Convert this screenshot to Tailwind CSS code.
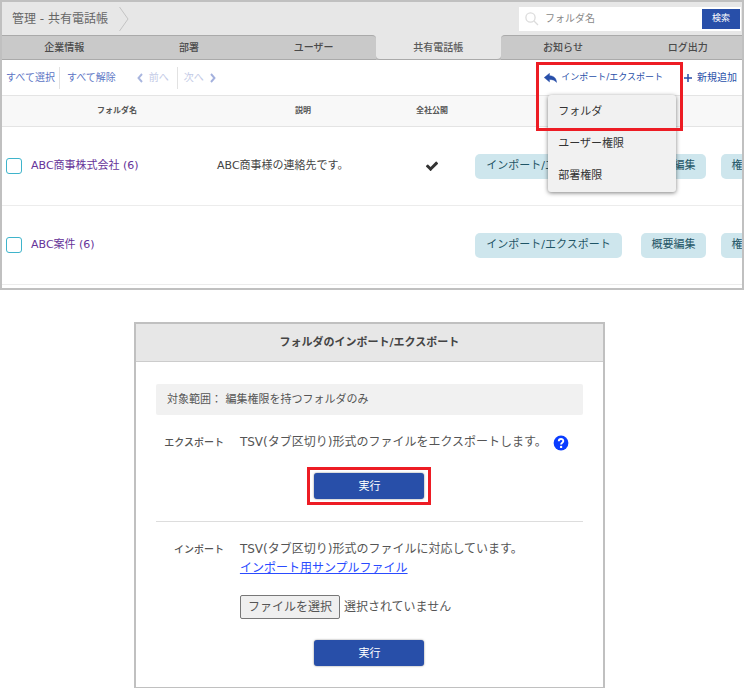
<!DOCTYPE html>
<html lang="ja">
<head>
<meta charset="utf-8">
<meta name="viewport" content="width=device-width, initial-scale=1">
<title>管理 - 共有電話帳</title>
<script src="https://cdn.jsdelivr.net/npm/@tailwindcss/browser@4"></script>
</head>
<body class="bg-white text-[#444] font-['DejaVu_Sans','Noto_Sans_CJK_JP',sans-serif]">

<section class="border-2 border-[#c0c0c0] overflow-hidden pb-[3px]">
  <header class="flex items-center h-[33px] bg-[#e7e7e7] pl-[10px] pr-px">
    <h1 class="text-[12px] text-[#666]">管理 - 共有電話帳</h1>
    <svg class="ml-[10px] w-3 h-[26px]" viewBox="0 0 12 26" fill="none" stroke="#c4c4c4" aria-hidden="true"><path d="M1.500 1 10 13 1.500 25"/></svg>
    <form class="ml-auto flex items-center bg-white h-6 w-[222px] pr-px">
      <svg class="ml-[6px] w-[14px] h-[14px] shrink-0" viewBox="0 0 14 14" fill="none" stroke="#dcdcdc" stroke-width="1.300" aria-hidden="true"><circle cx="5.500" cy="5.500" r="4.600"/><path d="m9 9 4 4"/></svg>
      <input type="text" aria-label="フォルダ名" placeholder="フォルダ名" class="ml-[6px] min-w-0 flex-1 text-[10px] outline-none placeholder:text-[#888]">
      <button type="button" class="w-[38px] h-5 shrink-0 bg-[#284fa9] text-white text-[9px]">検索</button>
    </form>
  </header>

  <nav class="grid grid-cols-6 -mr-2 h-[25px] bg-[#e7e7e7] text-[10px] font-medium text-[#4a4a4a] text-center leading-[23px]">
    <a href="#" class="bg-[#c9c9c9] border-y border-[#aaa]">企業情報</a>
    <a href="#" class="bg-[#c9c9c9] border-y border-[#aaa]">部署</a>
    <a href="#" class="bg-[#c9c9c9] border-y border-[#aaa] rounded-tr-[4px]">ユーザー</a>
    <span class="bg-[#bbb]"><a href="#" aria-current="page" class="block h-[25px] pt-px bg-[#e7e7e7] border-b border-[#aaa] rounded-b-[4px] text-[#5a5a5a]">共有電話帳</a></span>
    <a href="#" class="bg-[#c9c9c9] border-y border-[#aaa] rounded-tl-[4px]">お知らせ</a>
    <a href="#" class="bg-[#c9c9c9] border-y border-[#aaa]">ログ出力</a>
  </nav>

  <div class="flex items-center h-[35px] pl-1 pr-[5px] text-[10px] text-[#4a63b8]">
    <button type="button" class="text-[#5b74c4]">すべて選択</button>
    <span class="ml-1 mr-[7px] h-[22px] w-px bg-[#e2e2e2]"></span>
    <button type="button" class="text-[#5b74c4]">すべて解除</button>
    <button type="button" disabled class="ml-[21px] flex items-center gap-[6px] text-[#c3cae6]">
      <svg class="w-[6px] h-[10px]" viewBox="0 0 6 10" fill="none" stroke="#a9b6df" stroke-width="1.900" aria-hidden="true"><path d="M5 1 1.500 5 5 9"/></svg>前へ</button>
    <span class="ml-2 mr-[6px] h-[22px] w-px bg-[#e2e2e2]"></span>
    <button type="button" disabled class="flex items-center gap-[6px] text-[#c3cae6]">次へ
      <svg class="w-[6px] h-[10px]" viewBox="0 0 6 10" fill="none" stroke="#a3b0dd" stroke-width="1.900" aria-hidden="true"><path d="M1 1 4.500 5 1 9"/></svg></button>

    <div class="relative ml-auto mr-[21px]">
      <button type="button" aria-expanded="true" class="flex items-center gap-1 text-[9px] text-[#284fa9]">
        <svg class="w-[13px] h-[10px]" viewBox="0 0 13 10" fill="#284fa9" aria-hidden="true"><path d="M.2 4.600 5.500.3v2.500c4.200.1 6.700 2 7.100 6.700C11 7.400 9 6.500 5.500 6.500V9z" stroke="#284fa9" stroke-width=".4" stroke-linejoin="round"/></svg>インポート/エクスポート</button>
      <ul class="absolute z-10 left-1 top-[24px] w-32 pt-px rounded-[3px] bg-[#f1f1f1] shadow-[0_1px_4px_rgba(0,0,0,0.5)] text-[11px] text-[#333] leading-8">
        <li><a href="#" class="block px-[10px]">フォルダ</a></li>
        <li><a href="#" class="block px-[10px]">ユーザー権限</a></li>
        <li><a href="#" class="block px-[10px]">部署権限</a></li>
      </ul>
      <span class="absolute z-20 -left-2 -top-[9px] w-[147px] h-[69px] border-3 border-[#ed1c24] pointer-events-none"></span>
    </div>
    <button type="button" class="flex items-center gap-[5px] text-[#284fa9]">
      <svg class="w-2 h-2" viewBox="0 0 8 8" stroke="#284fa9" stroke-width="1.500" aria-hidden="true"><path d="M4 0v8M0 4h8"/></svg>新規追加</button>
  </div>

  <table class="w-full table-fixed border-collapse text-[11px]">
    <colgroup><col class="w-[29px]"><col class="w-[172px]"><col class="w-[200px]"><col class="w-[58px]"><col></colgroup>
    <thead>
      <tr class="h-[31px] bg-[#f8f8f8] border-y border-[#e4e4e4] text-[8px] text-[#555]">
        <th></th><th>フォルダ名</th><th>説明</th><th>全社公開</th><th></th>
      </tr>
    </thead>
    <tbody>
      <tr class="h-[79px] border-b border-[#ececec]">
        <td class="pl-1"><input type="checkbox" aria-label="ABC商事株式会社" class="block appearance-none w-4 h-4 rounded-[3px] border border-[#3fb4cb]"></td>
        <td><a href="#" class="text-[#663399]">ABC商事株式会社 (6)</a></td>
        <td class="pl-[14px] text-[#444]">ABC商事様の連絡先です。</td>
        <td><svg class="mx-auto w-[14px] h-[14px]" viewBox="0 0 1792 1792" fill="#333" role="img" aria-label="公開"><path d="M1671 566q0 40-28 68l-724 724-136 136q-28 28-68 28t-68-28l-136-136-362-362q-28-28-28-68t28-68l136-136q28-28 68-28t68 28l294 295 656-657q28-28 68-28t68 28l136 136q28 28 28 68z"/></svg></td>
        <td class="pl-[14px] overflow-hidden">
          <div class="flex text-[#1f5566]">
            <button type="button" class="shrink-0 h-[25px] w-[147px] rounded-[5px] bg-[#cee6ed]">インポート/エクスポート</button>
            <button type="button" class="shrink-0 h-[25px] w-[65px] ml-[19px] rounded-[5px] bg-[#cee6ed]">概要編集</button>
            <button type="button" class="shrink-0 h-[25px] w-[65px] ml-[15px] rounded-[5px] bg-[#cee6ed]">権限編集</button>
          </div>
        </td>
      </tr>
      <tr class="h-[79px] border-b border-[#ececec]">
        <td class="pl-1"><input type="checkbox" aria-label="ABC案件" class="block appearance-none w-4 h-4 rounded-[3px] border border-[#3fb4cb]"></td>
        <td><a href="#" class="text-[#663399]">ABC案件 (6)</a></td>
        <td></td>
        <td></td>
        <td class="pl-[14px] overflow-hidden">
          <div class="flex text-[#1f5566]">
            <button type="button" class="shrink-0 h-[25px] w-[147px] rounded-[5px] bg-[#cee6ed]">インポート/エクスポート</button>
            <button type="button" class="shrink-0 h-[25px] w-[65px] ml-[19px] rounded-[5px] bg-[#cee6ed]">概要編集</button>
            <button type="button" class="shrink-0 h-[25px] w-[65px] ml-[15px] rounded-[5px] bg-[#cee6ed]">権限編集</button>
          </div>
        </td>
      </tr>
    </tbody>
  </table>
</section>

<section class="mt-8 ml-[18%] w-full max-w-[471px] border-2 border-b border-[#c0c0c0]">
  <h2 class="h-[38px] leading-[37px] bg-[#e7e7e7] border-b border-[#ccc] text-center text-[11px] font-bold">フォルダのインポート/エクスポート</h2>
  <div class="px-5 pt-[22px] pb-[21px] text-[12px] leading-[19px] text-[#555]">
    <p class="h-[31px] leading-[31px] px-[11px] rounded-[2px] bg-[#f1f1f1] text-[11px]">対象範囲： 編集権限を持つフォルダのみ</p>

    <div class="mt-[18px] grid grid-cols-[68px_1fr] gap-x-4">
      <h3 class="text-right text-[10px] font-medium">エクスポート</h3>
      <div class="flex items-center gap-[6px]">
        <p>TSV(タブ区切り)形式のファイルをエクスポートします。</p>
        <a href="#" aria-label="ヘルプ"><svg class="w-4 h-4" viewBox="0 0 16 16" aria-hidden="true"><circle cx="8" cy="8" r="7.400" fill="#0a3cff"/><path d="M5.800 6.200c0-3 4.500-2.900 4.500-.2 0 1.700-2.200 1.600-2.200 3.400" fill="none" stroke="#fff" stroke-width="1.900"/><circle cx="8.100" cy="11.900" r="1.200" fill="#fff"/></svg></a>
      </div>
    </div>
    <div class="mt-[15px] mx-auto w-[124px] h-[38px] px-1 py-[3px] border-3 border-[#ed1c24]">
      <button type="button" class="block w-full h-[26px] rounded-[3px] bg-[#284fa9] text-white text-[11px] shadow-[0_0_2px_rgba(0,0,0,0.5)]">実行</button>
    </div>

    <hr class="mt-4 border-[#ddd]">

    <div class="mt-[18px] grid grid-cols-[68px_1fr] gap-x-4">
      <h3 class="text-right text-[10px] font-medium">インポート</h3>
      <div>
        <p>TSV(タブ区切り)形式のファイルに対応しています。</p>
        <a href="#" class="text-[#2a4bff] underline">インポート用サンプルファイル</a>
        <div class="mt-[17px] flex items-center gap-1">
          <input id="file" type="file" class="sr-only">
          <label for="file" class="flex items-center justify-center w-[100px] h-6 rounded-[2px] border border-[#777] bg-[#efefef]">ファイルを選択</label>
          <span>選択されていません</span>
        </div>
      </div>
    </div>
    <button type="button" class="mt-[21px] mx-auto block w-[110px] h-[26px] rounded-[3px] bg-[#284fa9] text-white text-[11px] shadow-[0_0_2px_rgba(0,0,0,0.5)]">実行</button>
  </div>
</section>
</body>
</html>
